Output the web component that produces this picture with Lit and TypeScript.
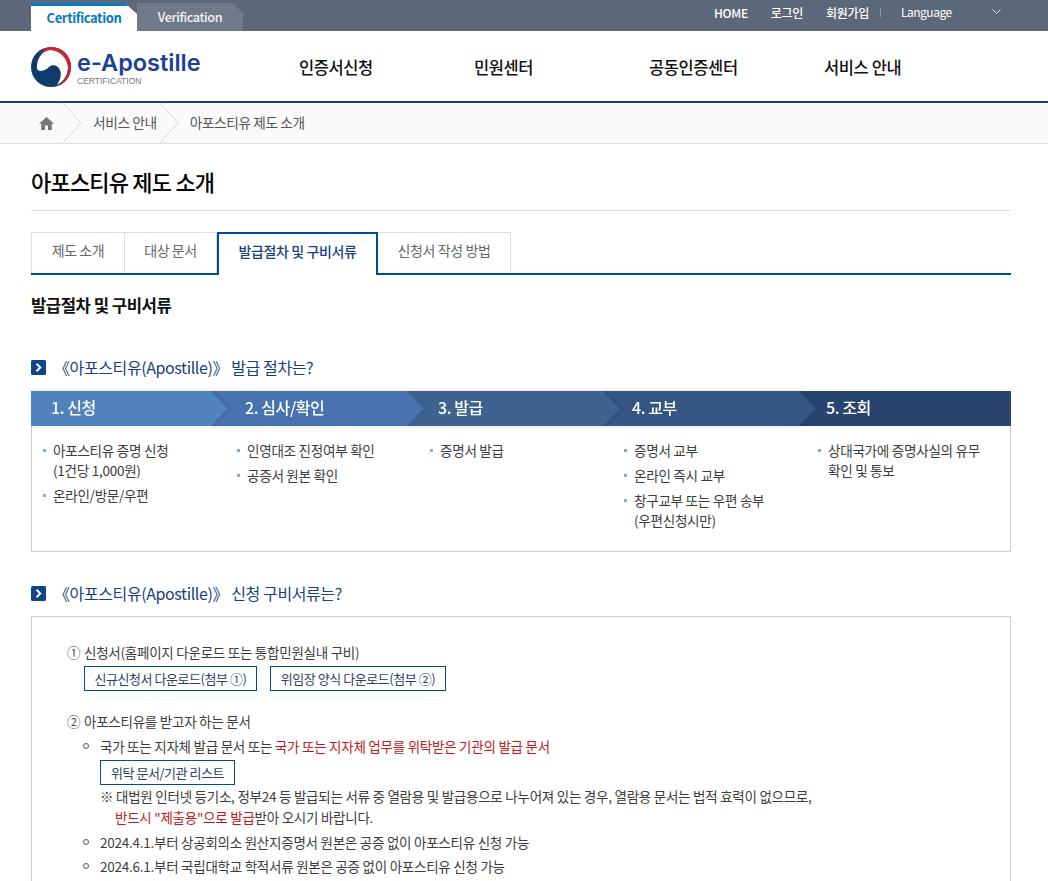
import { LitElement, html, css, svg } from "lit";
import { customElement } from "lit/decorators.js";

const steps = [
  { t: "1. 신청", c: "#5082bb", w: 197, p: 20, items: [["아포스티유 증명 신청", "(1건당 1,000원)"], ["온라인/방문/우편"]] },
  { t: "2. 심사/확인", c: "#4773ae", w: 213, p: 34, items: [["인영대조 진정여부 확인"], ["공증서 원본 확인"]] },
  { t: "3. 발급", c: "#3f6391", w: 213, p: 31, items: [["증명서 발급"]] },
  { t: "4. 교부", c: "#355583", w: 213, p: 29, items: [["증명서 교부"], ["온라인 즉시 교부"], ["창구교부 또는 우편 송부", "(우편신청시만)"]] },
  { t: "5. 조회", c: "#29436f", w: 212, p: 27, items: [["상대국가에 증명사실의 유무", "확인 및 통보"]] },
];

@customElement("app-root")
export class AppRoot extends LitElement {
  static styles = css`
    :host { display: block; height: 881px; overflow: hidden; background: #fff; font-family: "Noto Sans CJK KR", "Noto Sans", sans-serif; color: #333; font-size: 14px; letter-spacing: -0.4px; }
    a { color: inherit; text-decoration: none; }
    .top { height: 31px; background: #5c6779; display: flex; justify-content: space-between; padding: 0 31px; }
    .sites { display: flex; align-items: flex-end; }
    .site { width: 106px; height: 28px; box-sizing: border-box; display: flex; align-items: center; justify-content: center; font-size: 13px; font-weight: 700; padding-bottom: 2px; }
    .site.on { background: #fff; color: #0a78c2; border-top: 3px solid #0a78c2; clip-path: polygon(0 0, 94px 0, 100% 11px, 100% 100%, 0 100%); }
    .site.off { background: #6f798a; color: #f2f3f5; font-weight: 500; font-size: 12.7px; clip-path: polygon(0 0, 95px 0, 100% 10px, 100% 100%, 0 100%); }
    .util { display: flex; align-items: center; color: #fff; font-size: 12px; font-weight: 500; padding-bottom: 7px; letter-spacing: -0.3px; }
    .util a { margin-left: 23px; }
    .util .home { margin-left: 0; }
    .util .sep { width: 1px; height: 9px; background: #8e97a4; margin: 0 20px 0 11px; }
    .util .lang { margin: 0; width: 91px; font-weight: 400; font-size: 12px; letter-spacing: -0.5px; padding-bottom: 2px; }
    .util svg { margin-right: 16px; }
    .head { height: 70px; border-bottom: 2px solid #1a3f7e; display: flex; align-items: center; padding-left: 31px; }
    .logo { display: flex; align-items: center; gap: 6px; width: 268px; padding-top: 2px; }
    .logo-text { display: flex; flex-direction: column; margin-top: 2px; }
    .logo-main { font: 600 23.5px/25px Inter, "Liberation Sans", sans-serif; color: #1b4194; letter-spacing: 0; }
    .logo-sub { font: 400 8.5px/10px "Liberation Sans", sans-serif; color: #777; letter-spacing: 0; margin-top: 1px; }
    .gnb { display: flex; padding-top: 1px; }
    .gnb a { width: 175px; font-size: 16.5px; font-weight: 500; color: #111; letter-spacing: -0.4px; }
    .crumb { height: 40px; background: #fafafa; border-bottom: 1px solid #e2e2e2; display: flex; align-items: center; padding-left: 31px; color: #555; font-size: 13.7px; line-height: 36px; letter-spacing: -0.4px; }
    .crumb a { padding-bottom: 3px; }
    .homei { width: 31px; display: flex; justify-content: center; }
    .crumb .sep { margin: 0 11px 0 0; flex: none; }
    .gap { width: 2px; }
    .main { padding: 0 37px 0 31px; }
    h1 { margin: 0; height: 66px; border-bottom: 1px solid #ddd; font-size: 22px; font-weight: 500; color: #000; line-height: 74px; letter-spacing: -0.8px; }
    .tabs { display: flex; margin-top: 21px; height: 43px; border-bottom: 2px solid #004c93; box-sizing: border-box; }
    .tab { height: 41px; box-sizing: border-box; display: flex; align-items: center; justify-content: center; border: 1px solid #ddd; border-bottom: 0; border-left-width: 0; color: #666; font-size: 14px; padding-bottom: 7px; }
    .tab:first-child { border-left-width: 1px; }
    .tab.on { height: 43px; border: 2px solid #004c93; border-bottom: 0; background: #fff; color: #1a3f7e; font-weight: 500; padding-bottom: 8px; }
    h2 { margin: 18px 0 0; font-size: 16.7px; font-weight: 700; color: #111; line-height: 24px; letter-spacing: -0.5px; }
    .sub { display: flex; align-items: center; gap: 8px; font-size: 16px; color: #173f80; line-height: 24px; letter-spacing: -0.4px; }
    .sub.a { margin-top: 38px; }
    .sub.b { margin-top: 29px; }
    .box15 { width: 15px; height: 15px; flex: none; }
    .proc { margin-top: 12px; border: 1px solid #ccc; border-top: 0; height: 161px; box-sizing: border-box; }
    .bar { display: flex; margin: 0 -1px; height: 35px; }
    .seg { height: 35px; flex: none; margin-right: -17px; position: relative; filter: drop-shadow(2px 0 2px rgba(20, 40, 80, 0.16)); }
    .seg:last-child { margin-right: 0; filter: none; }
    .seg-in { height: 35px; box-sizing: border-box; display: flex; align-items: center; padding-bottom: 3px; color: #fff; font-size: 16px; font-weight: 500; letter-spacing: -0.4px; clip-path: polygon(0 0, calc(100% - 17px) 0, 100% 50%, calc(100% - 17px) 100%, 0 100%); }
    .seg:last-child .seg-in { clip-path: none; }
    .cols { display: grid; grid-template-columns: 194px 193px 194px 194px 1fr; }
    ul.step { list-style: none; margin: 14px 0 0; padding: 0 0 0 21px; font-size: 13.6px; line-height: 20px; color: #3c3c3c; letter-spacing: -0.3px; }
    ul.step li { position: relative; margin-bottom: 5px; white-space: nowrap; }
    ul.step li::before { content: ""; position: absolute; left: -10px; top: 9px; width: 3px; height: 3px; background: #8fa8cc; }
    .docs { margin-top: 11px; border: 1px solid #ccc; border-bottom: 0; padding: 23px 35px 0; height: 300px; box-sizing: border-box; font-size: 13.5px; line-height: 24px; color: #3c3c3c; letter-spacing: -0.25px; }
    .btn { display: inline-flex; align-items: center; justify-content: center; height: 25px; box-sizing: border-box; border: 1px solid #004c93; color: #2a3f66; font-size: 13px; letter-spacing: -0.45px; }
    .btns { display: flex; gap: 13px; padding-left: 17px; margin-top: 2px; height: 25px; }
    .n2 { margin-top: 18px; }
    .num { color: #555; margin-right: 1px; }
    ul.c { list-style: none; margin: 1px 0 0; padding: 0 0 0 33px; }
    ul.c li { position: relative; }
    ul.c li::before { content: ""; position: absolute; left: -17px; top: 9px; width: 6px; height: 6px; border: 1px solid #555; border-radius: 50%; box-sizing: border-box; }
    .red { color: #c0181d; }
    .lbtn { display: flex; height: 25px; padding-top: 2px; margin-bottom: 1px; }
    .note { line-height: 21px; margin: 1px 0 2px; }
    .note div { padding-left: 15px; }
  `;

  private emblem() {
    return svg`<svg width="40" height="40" viewBox="0 0 40 40" aria-hidden="true">
      <circle cx="20" cy="20" r="20" fill="#0e3a6c"/>
      <path d="M6 22 C5 11 12 3 20 3 C30 3 37 11 37 20 C37 28 33 34 26 38 C29 33 31 28 29 23 C27 18 21 17 18 20 C15 23 9 26 6 22 Z" fill="#fff"/>
      <path d="M8 7 C12 2 16 0 20 0 C31 0 40 9 40 20 C40 29 35 36 27 39 C33 35 37 28 37 20 C36 11 29 4 20 3 C16 3 12 4 8 7 Z" fill="#cf2338"/>
    </svg>`;
  }

  private sep() {
    return svg`<svg class="sep" width="20" height="40" viewBox="0 0 20 40" aria-hidden="true"><path d="M1 0 L19 20 L1 40" fill="none" stroke="#d8d8d8"/></svg>`;
  }

  private arrowBox() {
    return svg`<svg class="box15" viewBox="0 0 15 15" aria-hidden="true"><rect width="15" height="15" rx="1.5" fill="#14438a"/><path d="M5.5 3.8 L9.3 7.5 L5.5 11.2" fill="none" stroke="#fff" stroke-width="1.9"/></svg>`;
  }

  render() {
    return html`
      <div class="top">
        <div class="sites"><a class="site on">Certification</a><a class="site off">Verification</a></div>
        <div class="util">
          <a class="home">HOME</a><a>로그인</a><a>회원가입</a><span class="sep"></span><a class="lang">Language</a>
          <svg width="9" height="6" viewBox="0 0 9 6" aria-hidden="true"><path d="M0.5 0.5 L4.5 4.5 L8.5 0.5" fill="none" stroke="#dfe2e6"/></svg>
        </div>
      </div>
      <header class="head">
        <a class="logo">${this.emblem()}<span class="logo-text"><span class="logo-main">e-Apostille</span><span class="logo-sub">CERTIFICATION</span></span></a>
        <nav class="gnb"><a>인증서신청</a><a>민원센터</a><a>공동인증센터</a><a>서비스 안내</a></nav>
      </header>
      <div class="crumb">
        <span class="homei"><svg width="15" height="13" viewBox="0 0 15 13" aria-hidden="true"><path d="M7.5 0 L15 6.8 L12.8 6.8 L12.8 13 L9 13 L9 8.5 L6 8.5 L6 13 L2.2 13 L2.2 6.8 L0 6.8 Z" fill="#777"/></svg></span>
        ${this.sep()}<a>서비스 안내</a><span class="gap"></span>${this.sep()}<a>아포스티유 제도 소개</a>
      </div>
      <main class="main">
        <h1>아포스티유 제도 소개</h1>
        <div class="tabs">
          <a class="tab" style="width:94px">제도 소개</a>
          <a class="tab" style="width:92px">대상 문서</a>
          <a class="tab on" style="width:161px">발급절차 및 구비서류</a>
          <a class="tab" style="width:133px">신청서 작성 방법</a>
        </div>
        <h2>발급절차 및 구비서류</h2>
        <div class="sub a">${this.arrowBox()}<span>《아포스티유(Apostille)》 발급 절차는?</span></div>
        <section class="proc">
          <div class="bar">
            ${steps.map((s, i) => html`<div class="seg" style="width:${s.w}px;z-index:${5 - i}">
              <div class="seg-in" style="background:${s.c};padding-left:${s.p}px">${s.t}</div>
            </div>`)}
          </div>
          <div class="cols">
            ${steps.map((s) => html`<ul class="step">${s.items.map((it) => html`<li>${it[0]}${it[1] ? html`<br />${it[1]}` : ""}</li>`)}</ul>`)}
          </div>
        </section>
        <div class="sub b">${this.arrowBox()}<span>《아포스티유(Apostille)》 신청 구비서류는?</span></div>
        <section class="docs">
          <div><span class="num">①</span> 신청서(홈페이지 다운로드 또는 통합민원실내 구비)</div>
          <div class="btns"><a class="btn" style="width:173px">신규신청서 다운로드(첨부 ①)</a><a class="btn" style="width:176px">위임장 양식 다운로드(첨부 ②)</a></div>
          <div class="n2"><span class="num">②</span> 아포스티유를 받고자 하는 문서</div>
          <ul class="c">
            <li>국가 또는 지자체 발급 문서 또는 <span class="red">국가 또는 지자체 업무를 위탁받은 기관의 발급 문서</span>
              <div class="lbtn"><a class="btn" style="width:135px">위탁 문서/기관 리스트</a></div>
              <div class="note">※ 대법원 인터넷 등기소, 정부24 등 발급되는 서류 중 열람용 및 발급용으로 나누어져 있는 경우, 열람용 문서는 법적 효력이 없으므로,<div><span class="red">반드시 "제출용"으로 발급</span>받아 오시기 바랍니다.</div></div>
            </li>
            <li>2024.4.1.부터 상공회의소 원산지증명서 원본은 공증 없이 아포스티유 신청 가능</li>
            <li>2024.6.1.부터 국립대학교 학적서류 원본은 공증 없이 아포스티유 신청 가능</li>
          </ul>
        </section>
      </main>
    `;
  }
}
